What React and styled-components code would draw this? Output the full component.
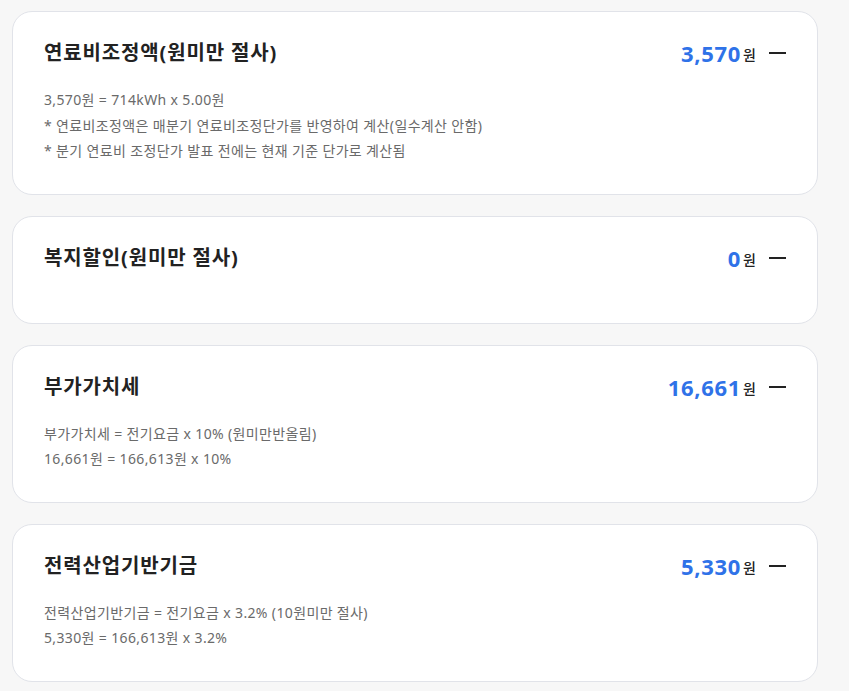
import React from "react";
import styled, { createGlobalStyle } from "styled-components";

const GlobalStyle = createGlobalStyle`
  html, body {
    margin: 0;
    padding: 0;
    background: #ffffff;
  }
  body {
    font-family: "Noto Sans", "Noto Sans CJK KR", sans-serif;
  }
  * { box-sizing: border-box; }
`;

const Page = styled.div`
  width: 849px;
  min-height: 691px;
  background: #f7f7f7;
  padding: 11px 31px 10px 12px;
  display: flex;
  flex-direction: column;
  gap: 21px;
`;

const Card = styled.section`
  background: #ffffff;
  border: 1px solid #e1e3e9;
  border-radius: 20px;
  padding: 27px 31px 30px 31px;
`;

const Header = styled.div`
  display: flex;
  align-items: center;
  justify-content: space-between;
  height: 28px;
`;

const Title = styled.h3`
  margin: 0;
  font-family: "Noto Sans", "Noto Sans CJK KR", sans-serif;
  font-size: 20px;
  font-weight: 700;
  line-height: 28px;
  color: #222222;
  letter-spacing: 0.85px;
`;

const AmountGroup = styled.div`
  display: flex;
  align-items: center;
`;

const Amount = styled.span`
  font-size: 22px;
  font-weight: 700;
  color: #2f72e8;
  line-height: 28px;
  letter-spacing: 0.7px;
`;

const Unit = styled.span`
  font-family: "Noto Sans CJK KR", sans-serif;
  font-size: 14px;
  font-weight: 500;
  color: #222222;
  margin-left: 2px;
  line-height: 28px;
  padding-top: 2px;
`;

const ToggleButton = styled.button`
  border: 0;
  background: transparent;
  padding: 0;
  margin-left: 13px;
  width: 17px;
  height: 20px;
  display: flex;
  align-items: center;
  cursor: pointer;
`;

const Details = styled.div`
  margin-top: ${(p) => (p.$empty ? "21px" : "20px")};
  font-size: 14px;
  line-height: 25.5px;
  color: #6a6a6a;
  letter-spacing: 0.36px;
`;

const Line = styled.p`
  margin: 0;
`;

const MinusIcon = () => (
  <svg width="17" height="20" viewBox="0 0 17 20" aria-hidden="true">
    <rect x="0" y="9" width="17" height="2" fill="#222222" />
  </svg>
);

const items = [
  {
    title: "연료비조정액(원미만 절사)",
    amount: "3,570",
    lines: [
      "3,570원 = 714kWh x 5.00원",
      "* 연료비조정액은 매분기 연료비조정단가를 반영하여 계산(일수계산 안함)",
      "* 분기 연료비 조정단가 발표 전에는 현재 기준 단가로 계산됨",
    ],
  },
  {
    title: "복지할인(원미만 절사)",
    amount: "0",
    lines: [],
  },
  {
    title: "부가가치세",
    amount: "16,661",
    lines: ["부가가치세 = 전기요금 x 10% (원미만반올림)", "16,661원 = 166,613원 x 10%"],
  },
  {
    title: "전력산업기반기금",
    amount: "5,330",
    lines: [
      "전력산업기반기금 = 전기요금 x 3.2% (10원미만 절사)",
      "5,330원 = 166,613원 x 3.2%",
    ],
  },
];

export default function App() {
  return (
    <>
      <GlobalStyle />
      <Page>
        {items.map((item) => (
          <Card key={item.title}>
            <Header>
              <Title>{item.title}</Title>
              <AmountGroup>
                <Amount>{item.amount}</Amount>
                <Unit>원</Unit>
                <ToggleButton aria-label="접기">
                  <MinusIcon />
                </ToggleButton>
              </AmountGroup>
            </Header>
            <Details $empty={item.lines.length === 0}>
              {item.lines.map((l) => (
                <Line key={l}>{l}</Line>
              ))}
            </Details>
          </Card>
        ))}
      </Page>
    </>
  );
}
